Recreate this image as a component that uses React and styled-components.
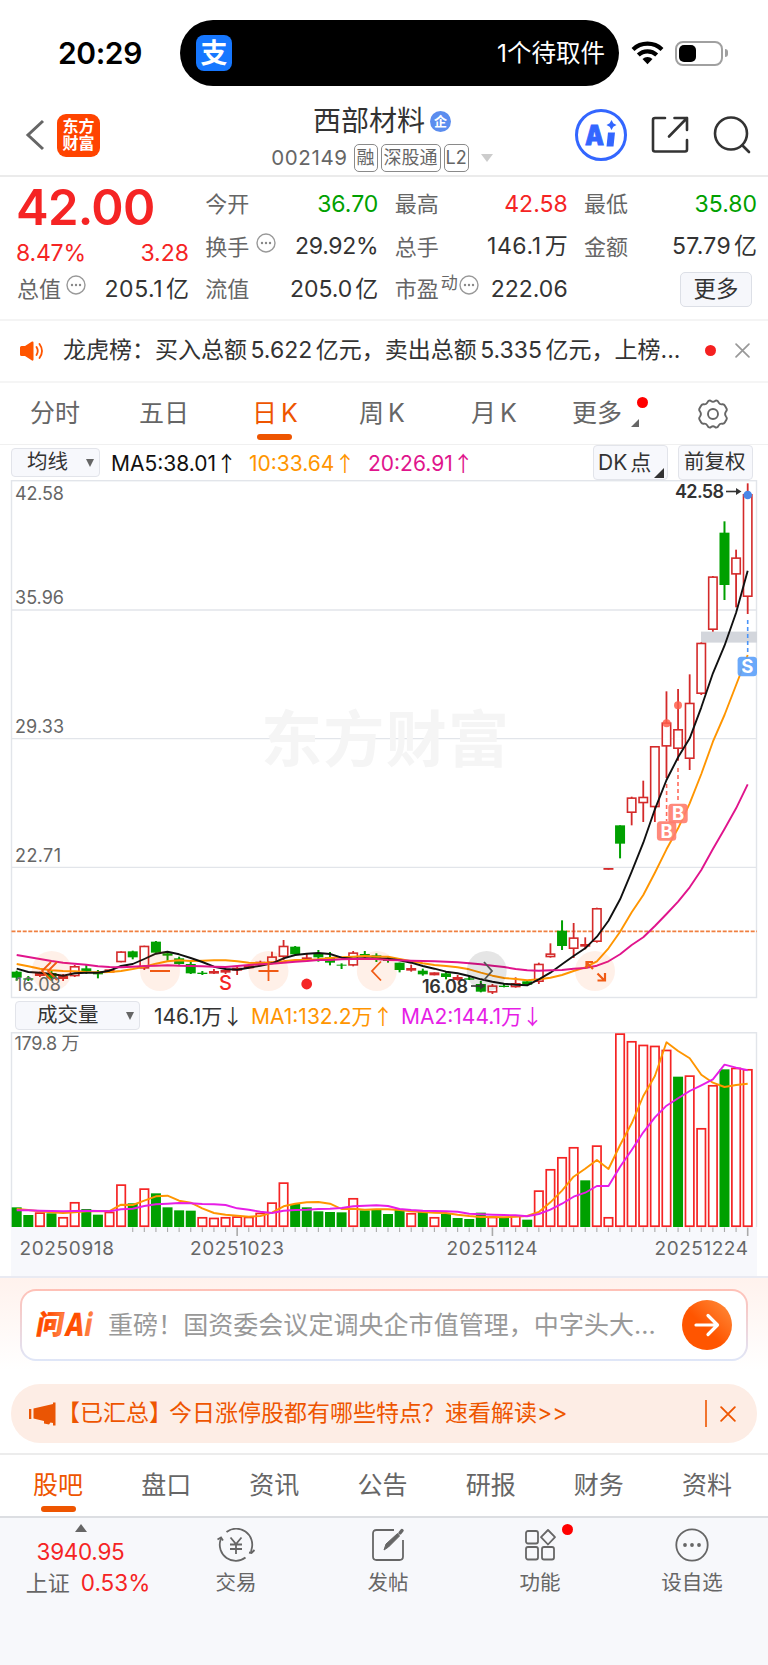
import React from 'react';
import styled, { createGlobalStyle } from 'styled-components';

const Global = createGlobalStyle`
  * { box-sizing: border-box; }
  html, body { margin: 0; padding: 0; background: #fff; }
  body {
    width: 768px;
    font-family: Inter, "Noto Sans CJK SC", sans-serif;
    color: #333;
    line-height: 1;
    white-space: nowrap;
  }
  svg { display: block; flex: none; }
`;

const RED = '#f52424';
const GREEN = '#00a000';
const ORANGE = '#ee5500';
const GRAY = '#666';
const AMBER = '#ff9500';
const PINK = '#e0148c';
const VIOLET = '#e61ee6';

const Page = styled.main`
  width: 768px;
  height: 1665px;
  display: flex;
  flex-direction: column;
  overflow: hidden;
  background: #fff;
`;

const T = styled.span`
  font-size: ${(p) => p.$size || 23}px;
  color: ${(p) => p.$color || 'inherit'};
  font-weight: ${(p) => p.$weight || 400};
  letter-spacing: ${(p) => p.$track || 0}px;
`;
const Unit = styled.span`
  margin-left: 3px;
  letter-spacing: 0;
`;
const Figure = styled.span`
  margin: 0 3.5px;
`;
const Arrow = styled.span`
  font-family: "Noto Sans CJK SC", sans-serif;
`;

/* ---------- status bar ---------- */
const StatusBar = styled.header`
  height: 106px;
  padding: 20px 39px 20px 58px;
  display: flex;
  align-items: center;
`;
const Clock = styled(T)`
  width: 122px;
`;
const Island = styled.div`
  flex: none;
  width: 439px;
  height: 66px;
  border-radius: 33px;
  background: #000;
  color: #fff;
  padding: 0 14px 0 16px;
  display: flex;
  align-items: center;
  justify-content: space-between;
  margin-right: 12px;
`;
const PayIcon = styled.div`
  width: 36px;
  height: 36px;
  border-radius: 8px;
  background: #1677ff;
  font-size: 27px;
  font-weight: 700;
  display: grid;
  place-items: center;
`;
const Battery = styled.div`
  width: 48px;
  height: 25px;
  border: 2px solid #a0a0a0;
  border-radius: 8px;
  padding: 2px;
  margin-left: 11px;
`;
const Charge = styled.div`
  width: 17px;
  height: 17px;
  border-radius: 5px;
  background: #000;
`;
const BatteryTip = styled.div`
  width: 3px;
  height: 8px;
  border-radius: 0 4px 4px 0;
  background: #a0a0a0;
  margin-left: 2px;
`;

/* ---------- title bar ---------- */
const TitleBar = styled.div`
  height: 71px;
  border-bottom: 2px solid #ebebeb;
  padding: 0 17px 0 25px;
  display: flex;
`;
const TitleSide = styled.div`
  width: ${(p) => (p.$w ? `${p.$w}px` : 'auto')};
  display: flex;
  align-items: center;
  height: 58px;
  gap: ${(p) => p.$gap}px;
`;
const AppLogo = styled.div`
  width: 43px;
  height: 43px;
  border-radius: 9px;
  background: #ff4400;
  color: #fff;
  font-size: 16px;
  line-height: 17.5px;
  font-weight: 700;
  display: grid;
  place-content: center;
  text-align: center;
`;
const TitleMid = styled.div`
  display: flex;
  flex-direction: column;
  align-items: center;
  width: 260px;
  margin-right: auto;
`;
const Name = styled.div`
  display: flex;
  align-items: center;
  gap: 5px;
  height: 30px;
  margin-left: 20px;
`;
const Badge = styled.span`
  width: 21px;
  height: 21px;
  border-radius: 50%;
  background: #5b8def;
  color: #fff;
  font-size: 13px;
  font-weight: 700;
  display: grid;
  place-items: center;
`;
const Meta = styled.div`
  display: flex;
  align-items: center;
  gap: 3px;
  margin-top: 8px;
  margin-left: 20px;
`;
const Code = styled(T)`
  margin-right: 3px;
`;
const Tag = styled.span`
  height: 28px;
  border: 1.5px solid #8a8a8a;
  border-radius: 5px;
  padding: 0 ${(p) => (p.$tight ? 1 : 2)}px;
  font-size: 18px;
  color: ${GRAY};
  display: grid;
  place-items: center;
`;
const MetaCaret = styled.i`
  border: 6.5px solid transparent;
  border-top: 8px solid #ccc;
  border-bottom: 0;
  margin-left: 9px;
`;
const AiRing = styled.div`
  width: 52px;
  height: 52px;
  border: 3px solid #3366ff;
  border-radius: 50%;
  display: grid;
  place-items: center;
`;

/* ---------- quote ---------- */
const Quote = styled.section`
  height: 144px;
  border-bottom: 2px solid #f4f4f4;
  padding: 6px 11px 0 17px;
  display: flex;
  justify-content: space-between;
`;
const QuoteCol = styled.div`
  width: ${(p) => p.$w || 173}px;
  display: flex;
  flex-direction: column;
`;
const Cell = styled.div`
  height: ${(p) => p.$h || 42.5}px;
  display: flex;
  align-items: center;
  justify-content: space-between;
  padding-top: ${(p) => p.$top || 0}px;
  margin-left: ${(p) => p.$ml || 0}px;
`;
const Label = styled.div`
  display: flex;
  align-items: center;
  font-size: 22px;
  color: ${GRAY};
`;
const Sup = styled.span`
  font-size: 17px;
  margin: -12px 0 0 2px;
`;
const InfoWrap = styled.span`
  margin: -8px 0 0 ${(p) => p.$ml}px;
`;
const MoreButton = styled.button`
  width: 72px;
  height: 35px;
  margin: 0 5px 0 auto;
  padding: 0;
  border: 1.5px solid #dcdfe6;
  border-radius: 5px;
  background: #f6f7fb;
  color: #333;
  font: 22.5px Inter, "Noto Sans CJK SC", sans-serif;
  line-height: 1;
`;

/* ---------- news ---------- */
const News = styled.section`
  height: 62px;
  border-bottom: 2px solid #f5f5f5;
  padding: 0 18px 1px 20px;
  display: flex;
  align-items: center;
`;
const NewsText = styled(T)`
  width: 642px;
  margin-left: 19px;
`;
const Dot = styled.i`
  width: ${(p) => p.$d}px;
  height: ${(p) => p.$d}px;
  border-radius: 50%;
  background: ${(p) => p.$c || '#f52020'};
`;

/* ---------- period tabs ---------- */
const Periods = styled.nav`
  height: 62px;
  border-bottom: 1px solid #f0f0f0;
  padding-left: 30px;
  display: grid;
  grid-template-columns: 109px 113px 107px 112px 101px 126px 30px;
  justify-items: start;
`;
const Tab = styled.div`
  position: relative;
  height: ${(p) => p.$h || 61}px;
  display: flex;
  align-items: center;
  font-size: 25px;
  word-spacing: -3px;
  color: ${(p) => (p.$on ? ORANGE : GRAY)};
  &::after {
    content: '';
    display: ${(p) => (p.$on ? 'block' : 'none')};
    position: absolute;
    left: calc(50% - 17.5px);
    bottom: ${(p) => p.$bar || 4}px;
    width: 35px;
    height: 6px;
    border-radius: 3px;
    background: ${ORANGE};
  }
`;
const TabDot = styled(Dot)`
  position: absolute;
  right: -26px;
  top: 14px;
`;
const Corner = styled.i`
  position: absolute;
  right: ${(p) => p.$r}px;
  bottom: ${(p) => p.$b}px;
  border-left: ${(p) => p.$s}px solid transparent;
  border-bottom: ${(p) => p.$s}px solid ${(p) => p.$c};
`;

/* ---------- chart ---------- */
const Toolbar = styled.div`
  height: ${(p) => p.$h}px;
  padding: 0 15px 0 ${(p) => p.$pl}px;
  display: flex;
  align-items: center;
`;
const Chip = styled.div`
  position: relative;
  width: ${(p) => p.$w}px;
  height: ${(p) => p.$h}px;
  border: 1.5px solid #e2e4ea;
  border-radius: 4px;
  background: #f7f8fc;
  font-size: ${(p) => p.$size || 20.5}px;
  word-spacing: -3px;
  display: flex;
  align-items: center;
  padding: 0 5px 0 ${(p) => p.$pl}px;
  margin-left: ${(p) => p.$ml || 0}px;
  justify-content: space-between;
`;
const Caret = styled.i`
  border: 4.5px solid transparent;
  border-top: 8px solid #666;
  border-bottom: 0;
`;
const Indicator = styled(T)`
  margin-left: ${(p) => p.$ml}px;
  width: ${(p) => p.$w}px;
`;
const Spacer = styled.div`
  flex: 1;
`;

/* ---------- ask AI ---------- */
const AskArea = styled.section`
  height: 108px;
  border-top: 2px solid #e9eaf2;
  padding: 11px 20px 0;
  background: linear-gradient(#fff2ed, #fff 92px);
`;
const AskBox = styled.div`
  height: 72px;
  border: 2px solid transparent;
  border-radius: 16px;
  background: linear-gradient(#fff, #fff) padding-box,
    linear-gradient(#ffc0b6, #dfe6f8) border-box;
  padding: 0 14px;
  display: flex;
  align-items: center;
`;
const AskText = styled(T)`
  margin-left: 9px;
  width: 574px;
`;
const Go = styled.div`
  width: 50px;
  height: 50px;
  border-radius: 50%;
  background: linear-gradient(45deg, #ff5500 45%, #ff9040);
  display: grid;
  place-items: center;
`;
const Promo = styled.section`
  height: 59px;
  margin: 0 11px;
  border-radius: 29px;
  background: #fdede5;
  color: ${ORANGE};
  padding: 0 21px 0 18px;
  display: flex;
  align-items: center;
`;
const PromoText = styled(T)`
  width: 652px;
`;
const PromoLead = styled.span`
  margin-right: -3px;
`;
const Rule = styled.i`
  width: 2px;
  height: 27px;
  background: ${ORANGE};
  opacity: 0.8;
  margin-right: 13px;
`;

/* ---------- bottom ---------- */
const Sections = styled.nav`
  height: 65px;
  margin-top: 10px;
  border-top: 2px solid #ececec;
  border-bottom: 2px solid #dcdee2;
  padding: 0 36px 0 33px;
  display: flex;
  justify-content: space-between;
`;
const BottomBar = styled.footer`
  flex: 1;
  background: #f7f8fb;
  display: flex;
  padding-top: 6px;
`;
const IndexBox = styled.div`
  width: 160px;
  padding-left: 1px;
  display: flex;
  flex-direction: column;
  align-items: center;
`;
const IndexValue = styled(T)`
  margin-top: 9px;
`;
const IndexLine = styled.div`
  display: flex;
  gap: 11px;
  margin: 8px 0 0 15px;
`;
const Up = styled.i`
  border: 6px solid transparent;
  border-bottom: 8px solid #666;
  border-top: 0;
`;
const Action = styled.div`
  position: relative;
  width: 152px;
  padding-top: 3.5px;
  display: flex;
  flex-direction: column;
  align-items: center;
  gap: 11.5px;
  font-size: 20.5px;
  color: ${GRAY};
`;
const ActionDot = styled(Dot)`
  position: absolute;
  left: 98px;
  top: 0;
`;

/* ---------- chart data ---------- */
const STEP = 11.603;
const cx = (i) => 16.7 + i * STEP;
const scale = (base, list) => list.map((v) => base + v / 3);

// [up?, body top, body bottom, high, low]
const rows = (base, list) => list.map(([k, ...v]) => [k, ...scale(base, v)]);
const candles = [
  ...rows(900, [
    [0, 215, 233, 212, 242], [0, 235, 239, 228, 243], [1, 219, 228, 215, 231], [0, 219, 235, 212, 242],
    [1, 228, 237, 222, 243], [1, 198, 229, 195, 231], [0, 205, 214, 192, 222], [0, 217, 223, 210, 235],
    [1, 208, 218, 208, 218], [1, 154, 187, 154, 187], [0, 154, 172, 152, 178], [1, 137, 206, 137, 210],
    [0, 125, 158, 123, 158], [0, 160, 167, 156, 182], [0, 175, 192, 170, 194], [0, 192, 220, 182, 222],
    [0, 218, 222, 213, 225], [1, 213, 221, 207, 222], [1, 210, 218, 205, 222], [1, 203, 212, 198, 225],
    [1, 196, 205, 194, 206], [1, 185, 193, 182, 194], [1, 169, 190, 155, 192], [1, 137, 171, 120, 180],
    [0, 140, 163, 138, 163], [1, 172, 181, 160, 182], [0, 160, 172, 150, 185], [0, 172, 188, 156, 196],
    [0, 194, 197, 190, 207], [1, 157, 197, 153, 199], [0, 162, 167, 153, 178], [0, 166, 173, 160, 186],
  ]),
  ...rows(880, [
    [0, 236, 243, 232, 248], [0, 248, 270, 248, 277], [1, 264, 272, 254, 275], [0, 272, 283, 266, 287],
    [1, 277, 286, 277, 286], [0, 280, 291, 276, 298], [1, 291, 300, 285, 302], [0, 295, 299, 288, 300],
    [0, 312, 335, 303, 337], [1, 316, 338, 312, 342], [0, 317, 321, 310, 322], [1, 309, 322, 292, 323],
    [0, 304, 314, 302, 314], [1, 251, 306, 248, 312], [1, 220, 232, 190, 233], [0, 152, 198, 121, 210],
    [1, 172, 207, 129, 234], [1, 192, 200, 172, 208], [1, 84, 186, 83, 188],
  ]),
  ...rows(470, [
    [1, 1194, 1199, 1194, 1199], [0, 1066, 1121, 1066, 1165], [1, 982, 1029, 980, 1066], [1, 980, 1000, 932, 1056],
    [1, 828, 1012, 828, 1056], [1, 757, 830, 664, 924], [1, 777, 837, 657, 872], [1, 698, 867, 613, 900],
    [1, 518, 672, 517, 675], [1, 319, 480, 318, 485], [0, 188, 345, 154, 390], [1, 262, 314, 239, 412],
    [1, 72, 381, 40, 432],
  ]),
];
const ma5 = [
  ...scale(900, [206, 216, 218, 222, 227, 220, 218, 218, 212, 198, 192, 177, 161, 155, 163, 174, 186, 200, 207, 209, 203, 197, 190, 175, 165, 161, 159, 162, 173, 176, 175, 176]),
  ...scale(880, [236, 241, 248, 258, 266, 275, 280, 288, 298, 305, 311, 314, 316, 298, 278, 253, 228, 205, 170, 122]),
  ...scale(470, [1288, 1205, 1118, 1018, 930, 862, 805, 712, 610, 527, 428, 302]),
];
const ma10 = [
  ...scale(900, [192, 199, 206, 211, 213, 214, 216, 217, 216, 213, 207, 200, 191, 184, 181, 183, 182, 181, 181, 184, 188, 190, 187, 184, 180, 180, 178, 174, 172, 170, 168, 170]),
  ...scale(880, [230, 237, 244, 250, 255, 258, 262, 268, 278, 287, 294, 297, 301, 298, 293, 285, 273, 262, 244, 205, 155, 97]),
  ...scale(470, [1275, 1208, 1138, 1075, 1000, 912, 815, 735, 645, 555]),
];
const ma20 = [
  ...scale(900, [165, 171, 177, 183, 188, 191, 194, 199, 201, 202, 200, 198, 197, 196, 197, 198, 199, 200, 201, 198, 195, 193, 191, 188, 185, 183, 180, 180, 178, 177, 176, 177]),
  ...scale(880, [240, 241, 242, 243, 244, 245, 247, 250, 253, 257, 261, 267, 271, 272, 271, 270, 266, 264, 257, 244, 223, 195, 172, 138, 102]),
  ...scale(470, [1295, 1252, 1200, 1137, 1077, 1015, 943]),
];
const volumes = scale(1030, [
  532, 555, 547, 550, 561, 516, 537, 554, 545, 463, 520, 475, 490, 532, 541, 542, 561, 563, 561, 559, 560, 548, 517, 457, 522, 532, 544, 546, 547, 504, 541, 538,
  552, 540, 549, 546, 561, 552, 564, 567, 548, 560, 564, 556, 569, 481, 417, 381, 351, 451, 346, 561, 10, 33, 44, 47, 59, 140, 136, 294, 165, 118, 113, 117,
]);
const volumeDown = new Set([0, 1, 3, 6, 7, 10, 12, 13, 14, 15, 24, 25, 26, 27, 28, 30, 31, 32, 33, 35, 37, 38, 39, 40, 42, 44, 49, 57, 61]);
const vma1 = scale(1030, [
  537, 540, 544, 547, 549, 547, 544, 544, 543, 524, 525, 512, 499, 497, 512, 518, 535, 549, 554, 557, 560, 558, 548, 529, 521, 517, 516, 521, 537, 536, 539, 538,
  538, 540, 544, 546, 548, 549, 554, 558, 561, 561, 562, 560, 558, 546, 517, 482, 440, 416, 390, 417, 345, 280, 198, 138, 37, 63, 85, 134, 158, 171, 165, 161,
]);
const vma2 = scale(1030, [
  541, 541, 542, 543, 544, 543, 542, 543, 544, 538, 536, 528, 523, 521, 519, 520, 522, 523, 525, 535, 539, 545, 549, 542, 540, 539, 537, 536, 534, 529, 527, 526,
  528, 537, 540, 542, 543, 544, 545, 551, 553, 554, 555, 556, 559, 552, 539, 521, 500, 488, 468, 468, 410, 360, 307, 262, 227, 205, 183, 166, 148, 104, 113, 121,
]);
const points = (ys) => ys.map((y, i) => `${cx(i).toFixed(1)},${y.toFixed(1)}`).join(' ');

const Line = ({ ys, color }) => (
  <polyline points={points(ys)} fill="none" stroke={color} strokeWidth="1.9" strokeLinejoin="round" />
);

function Candle({ i, d: [up, top, bot, hi, lo] }) {
  const x = cx(i);
  if (!up)
    return (
      <g fill={GREEN}>
        <rect x={x - 1} y={hi} width="2" height={lo - hi} />
        <rect x={x - 5} y={top} width="10" height={bot - top} />
      </g>
    );
  return (
    <g>
      <rect x={x - 0.9} y={hi} width="1.8" height={lo - hi} fill="#d42a2a" />
      <rect x={x - 4.2} y={top + 0.8} width="8.4" height={Math.max(0.2, bot - top - 1.6)} fill="#fff" stroke="#d42a2a" strokeWidth="1.6" />
    </g>
  );
}

const Flag = ({ x, y, c, t }) => (
  <g>
    <rect x={x - 9.7} y={y - 9.8} width="19.4" height="19.6" rx="3.5" fill={c} />
    <text x={x} y={y + 6.5} fontSize="18.5" fontWeight="700" fill="#fff" textAnchor="middle">{t}</text>
  </g>
);

function PriceChart() {
  return (
    <svg width="768" height="519" viewBox="0 480 768 519">
      <g fill="none" stroke="#e2e5ea" strokeWidth="1.4">
        <rect x="11.5" y="480.7" width="745" height="516.8" />
        <path d="M11.5 610H756.5M11.5 738.6H756.5M11.5 867.4H756.5" />
      </g>
      <text x="261" y="762" fontSize="61" fontWeight="700" fill="#f5f5f5" textLength="248">东方财富</text>
      <rect x="701" y="631.6" width="56" height="11" fill="#d3d6dc" />
      <path d="M11.5 931.3H757" stroke="#f08040" strokeWidth="1.7" strokeDasharray="4 1.6" />
      {candles.map((d, i) => <Candle key={i} i={i} d={d} />)}
      <g fill="#ff5f4c" opacity="0.85">
        <circle cx="666.6" cy="723.3" r="4" />
        <circle cx="678" cy="705.3" r="4" />
      </g>
      <circle cx="747.7" cy="495" r="4.3" fill="#4a86e8" />
      <g strokeWidth="1.6" strokeDasharray="4 3">
        <path d="M666.6 784V821M678 768V803" stroke="#ff6a5a" />
        <path d="M747.7 620V655" stroke="#4a94f8" />
      </g>
      <Line ys={ma10} color={AMBER} />
      <Flag x={666.6} y={831} c="#ff7d6ee8" t="B" />
      <Flag x={678} y={813.5} c="#ff7d6ee8" t="B" />
      <Flag x={747.3} y={666.5} c="#5ca0fae8" t="S" />
      <Line ys={ma5} color="#111" />
      <Line ys={ma20} color={PINK} />
      <g fill="#ff5500" fillOpacity="0.09">
        <circle cx="51.7" cy="971" r="20" />
        <circle cx="160" cy="971" r="20" />
        <circle cx="268.5" cy="971" r="20" />
        <circle cx="376.8" cy="971" r="20" />
        <circle cx="595" cy="971" r="20" />
        <circle cx="486.7" cy="971" r="20" fill="#000" fillOpacity="0.1" />
      </g>
      <g fill="none" stroke="#f05a14" strokeWidth="1.8">
        <path d="M51 962L42 971L51 980M57 962L48 971L57 980" />
        <path d="M150 971H170M258.5 971H278.5M268.5 961V981" />
        <path d="M381 961.5L372 971L381 980.5" />
        <path d="M593 969L587 963M586.500 968.500V962H593M597.500 973.500L604.500 980.500M605 973V980.500H597.500" strokeWidth="2.2" />
        <path d="M484 962L492 971L484 980" stroke="#555" />
      </g>
      <g fill="#666" fontSize="18">
        <text x="15" y="500" textLength="49">42.58</text>
        <text x="15" y="604" textLength="49">35.96</text>
        <text x="15" y="733" textLength="49">29.33</text>
        <text x="15" y="862" textLength="46">22.71</text>
        <text x="15" y="991" textLength="46">16.08</text>
      </g>
      <g fill="#333" fontSize="18" fontWeight="600">
        <text x="675" y="497.500" textLength="49">42.58</text>
        <text x="422" y="993" textLength="46">16.08</text>
      </g>
      <g stroke="#333" strokeWidth="1.6" fill="#333">
        <path d="M726 491.500H738" />
        <path d="M736 488L741.500 491.500L736 495Z" stroke="none" />
        <path d="M471 986H482" />
        <path d="M480 982.500L485.500 986L480 989.500Z" stroke="none" />
      </g>
      <text x="225.500" y="989.5" fontSize="20" fontWeight="500" fill={RED} textAnchor="middle">S</text>
      <circle cx="306.7" cy="984" r="5.4" fill={RED} />
    </svg>
  );
}

function VolumeChart() {
  return (
    <svg width="768" height="244" viewBox="0 1032 768 244">
      <rect x="11" y="1227" width="746" height="49" fill="#f7f8fc" />
      <path d="M11.5 1227V1032.700H756.5V1227" fill="none" stroke="#e2e5ea" strokeWidth="1.4" />
      {volumes.map((y, i) =>
        volumeDown.has(i) ? (
          <rect key={i} x={cx(i) - 5} y={y} width="10" height={1227 - y} fill={GREEN} />
        ) : (
          <rect key={i} x={cx(i) - 4.2} y={y + 0.8} width="8.4" height={1225.4 - y} fill="#fff" stroke={RED} strokeWidth="1.7" />
        )
      )}
      <Line ys={vma1} color={AMBER} />
      <Line ys={vma2} color={VIOLET} />
      <g stroke="#aaa">
        {volumes.map((_, i) => {
          if (i < 10) return null;
          const major = i === 19 || i === 41 || i === 63;
          return <path key={i} d={`M${cx(i)} 1227.500V${major ? 1236 : 1232}`} strokeWidth={major ? 1.6 : 1.1} />;
        })}
      </g>
      <g fill="#666" fontSize="19">
        <text x="14.500" y="1050" fontSize="18" textLength="65">179.8 万</text>
        <text x="19.500" y="1255" textLength="94.500">20250918</text>
        <text x="190" y="1255" textLength="94">20251023</text>
        <text x="446.500" y="1255" textLength="91">20251124</text>
        <text x="654.500" y="1255" textLength="93.500">20251224</text>
      </g>
    </svg>
  );
}

/* ---------- icons ---------- */
const Info = ({ ml = 5 }) => (
  <InfoWrap $ml={ml}>
    <svg width="20" height="20" viewBox="0 0 20 20">
      <circle cx="10" cy="10" r="9" fill="none" stroke="#999" strokeWidth="1.4" />
      <g fill="#888"><circle cx="6" cy="10" r="1.2" /><circle cx="10" cy="10" r="1.2" /><circle cx="14" cy="10" r="1.2" /></g>
    </svg>
  </InfoWrap>
);
const Cross = ({ s, c, w }) => (
  <svg width={s} height={s} viewBox="0 0 14 14">
    <path d="M1 1L13 13M13 1L1 13" stroke={c} strokeWidth={w} strokeLinecap="round" />
  </svg>
);
const Wifi = () => (
  <svg width="33" height="24" viewBox="0 0 33 24">
    <g fill="none" stroke="#000" strokeWidth="4.2">
      <path d="M2 8.500A21 21 0 0 1 31 8.500" />
      <path d="M7.300 14A13.300 13.300 0 0 1 25.700 14" />
    </g>
    <path d="M11.500 18A7.300 7.300 0 0 1 21.500 18L16.500 23.300Z" />
  </svg>
);
const AiMark = () => (
  <svg width="34" height="32" viewBox="0 0 34 32" fill="#3366ff">
    <text x="1" y="26" fontSize="27" fontWeight="900" stroke="#3366ff" strokeWidth="0.8" textLength="19" lengthAdjust="spacingAndGlyphs">A</text>
    <path d="M24 13.500H31L29.500 27.500H22.500Z" />
    <path d="M27.500 1L29.300 4.200L32.500 6L29.300 7.800L27.500 11L25.700 7.800L22.500 6L25.700 4.200Z" />
  </svg>
);

const Trade = () => (
  <svg width="40" height="34" viewBox="0 0 40 34" fill="none" stroke="#666" strokeWidth="1.8">
    <path d="M10.500 4A16 16 0 0 1 35.500 21.500L35 24M29.500 29.500A16 16 0 0 1 4.500 12L5 10" />
    <path d="M1.500 11.500L5 9.500L7 12.500M33 24.500L35.500 25L38.500 22" />
    <path d="M14.500 9.500L20 16L25.500 9.500M14 16.500H26M14 21H26M20 16V26" />
  </svg>
);
const Post = () => (
  <svg width="34" height="34" viewBox="0 0 34 34" fill="none" stroke="#666" strokeWidth="1.8">
    <path d="M23 2H5.500Q2 2 2 5.500V28.500Q2 32 5.500 32H28.500Q32 32 32 28.500V12" />
    <path d="M13 22L15 16L26.500 5.500L28.500 8L17.500 19Z" fill="#666" strokeWidth="1" />
    <path d="M29 5L31 2.500" strokeWidth="3.500" strokeLinecap="round" />
  </svg>
);
const Apps = () => (
  <svg width="34" height="34" viewBox="0 0 34 34" fill="none" stroke="#666" strokeWidth="1.8" strokeLinejoin="round">
    <rect x="3" y="3" width="12" height="12.500" rx="2" />
    <rect x="3" y="19" width="12" height="12.500" rx="2" />
    <rect x="19" y="19" width="12" height="12.500" rx="2" />
    <path d="M25 2L32 9.200L25 16.500L18 9.200Z" />
  </svg>
);
const More = () => (
  <svg width="34" height="34" viewBox="0 0 34 34">
    <circle cx="17" cy="17" r="15.700" fill="none" stroke="#666" strokeWidth="1.8" />
    <g fill="#666"><circle cx="10" cy="17" r="1.900" /><circle cx="17" cy="17" r="1.900" /><circle cx="24" cy="17" r="1.900" /></g>
  </svg>
);

export default function App() {
  return (
    <Page>
      <Global />
      <StatusBar>
        <Clock $size={30} $weight={600} $color="#000" $track={-0.4}>20:29</Clock>
        <Island>
          <PayIcon>支</PayIcon>
          <T $size={24.5}>1个待取件</T>
        </Island>
        <Wifi />
        <Battery><Charge /></Battery>
        <BatteryTip />
      </StatusBar>

      <TitleBar>
        <TitleSide $gap={12} $w={217}>
          <svg width="20" height="32" viewBox="0 0 20 32"><path d="M18 2L3 16L18 30" fill="none" stroke="#666" strokeWidth="3" /></svg>
          <AppLogo>东方<br />财富</AppLogo>
        </TitleSide>
        <TitleMid>
          <Name><T $size={28}>西部材料</T><Badge>企</Badge></Name>
          <Meta>
            <Code $size={20.5} $color={GRAY} $track={0.6}>002149</Code>
            <Tag>融</Tag><Tag>深股通</Tag><Tag $tight>L2</Tag>
            <MetaCaret />
          </Meta>
        </TitleMid>
        <TitleSide $gap={24}>
          <AiRing><AiMark /></AiRing>
          <svg width="38" height="38" viewBox="0 0 38 38" fill="none" stroke="#333" strokeWidth="2.600" strokeLinejoin="round" strokeLinecap="round">
            <path d="M14 2H4Q2 2 2 4V33.500Q2 35.500 4 35.500H34Q36 35.500 36 33.500V24" />
            <path d="M23.500 2H36V14M36 2L18 20.500" />
          </svg>
          <svg width="38" height="38" viewBox="0 0 38 38" fill="none" stroke="#333" strokeWidth="2.600" strokeLinecap="round">
            <circle cx="18" cy="17.500" r="16" /><path d="M29.500 29.500L36 36" />
          </svg>
        </TitleSide>
      </TitleBar>

      <Quote>
        <QuoteCol $w={172}>
          <Cell $h={48} $ml={-1}><T $size={49} $weight={600} $color={RED} $track={-0.7}>42.00</T></Cell>
          <Cell $h={37} $top={8} $ml={-1}><T $color={RED} $track={-0.2}>8.47%</T><T $color={RED}>3.28</T></Cell>
          <Cell><Label>总值<Info /></Label><T $track={0.5}>205.1<Unit>亿</Unit></T></Cell>
        </QuoteCol>
        <QuoteCol>
          <Cell><Label>今开</Label><T $color={GREEN}>36.70</T></Cell>
          <Cell><Label>换手<Info ml={7} /></Label><T $track={-0.3}>29.92%</T></Cell>
          <Cell><Label>流值</Label><T>205.0<Unit>亿</Unit></T></Cell>
        </QuoteCol>
        <QuoteCol>
          <Cell><Label>最高</Label><T $color={RED}>42.58</T></Cell>
          <Cell><Label>总手</Label><T $track={0.6}>146.1<Unit>万</Unit></T></Cell>
          <Cell><Label>市盈<Sup>动</Sup><Info ml={1} /></Label><T>222.06</T></Cell>
        </QuoteCol>
        <QuoteCol>
          <Cell><Label>最低</Label><T $color={GREEN}>35.80</T></Cell>
          <Cell><Label>金额</Label><T $track={0.3}>57.79<Unit>亿</Unit></T></Cell>
          <Cell><MoreButton>更多</MoreButton></Cell>
        </QuoteCol>
      </Quote>

      <News>
        <svg width="24" height="20" viewBox="0 0 24 20">
          <path d="M0 6.500Q0 5 1.500 5H5L12 0.500Q13.500 0 13.500 1.500V18.500Q13.500 20 12 19.500L5 15H1.500Q0 15 0 13.500Z" fill="#ff5500" />
          <path d="M16.500 6Q19 10 16.500 14M19.500 3Q24.500 10 19.500 17" fill="none" stroke="#ff5500" strokeWidth="1.800" strokeLinecap="round" />
        </svg>
        <NewsText>龙虎榜：买入总额<Figure>5.622</Figure>亿元，卖出总额<Figure>5.335</Figure>亿元，上榜...</NewsText>
        <Dot $d={11} />
        <Spacer />
        <Cross s={15} c="#999" w={1.6} />
      </News>

      <Periods>
        <Tab>分时</Tab>
        <Tab>五日</Tab>
        <Tab $on>日 K</Tab>
        <Tab>周 K</Tab>
        <Tab>月 K</Tab>
        <Tab>更多<TabDot $d={11} $c="#ff0000" /><Corner $r={-17} $b={17} $s={8} $c="#666" /></Tab>
        <Tab>
          <svg width="30" height="30" viewBox="0 0 30 30" fill="none" stroke="#666" strokeWidth="1.900" strokeLinejoin="round">
            <path d="M10.500 1.800Q12 1 13 2Q15 3.600 17 2Q18 1 19.500 1.800L21 4Q22 5.600 24 5.300Q26 5 26.800 6.500L28.500 9.500Q29.300 11 28 12.500Q26.200 15 28 17.500Q29.300 19 28.500 20.500L26.800 23.500Q26 25 24 24.700Q22 24.400 21 26L19.500 28.200Q18 29 17 28Q15 26.400 13 28Q12 29 10.500 28.200L9 26Q8 24.400 6 24.700Q4 25 3.200 23.500L1.500 20.500Q0.700 19 2 17.500Q3.800 15 2 12.500Q0.700 11 1.500 9.500L3.200 6.500Q4 5 6 5.300Q8 5.600 9 4Z" />
            <circle cx="15" cy="15" r="5" />
          </svg>
        </Tab>
      </Periods>

      <Toolbar $h={35} $pl={11}>
        <Chip $w={89} $h={29} $pl={15}>均线<Caret /></Chip>
        <Indicator $size={21} $color="#111" $ml={11} $w={138}>MA5:38.01<Arrow>↑</Arrow></Indicator>
        <Indicator $size={21} $color={AMBER} $ml={0} $w={119}>10:33.64<Arrow>↑</Arrow></Indicator>
        <Indicator $size={21} $color={PINK} $ml={0} $w={110}>20:26.91<Arrow>↑</Arrow></Indicator>
        <Spacer />
        <Chip $w={75} $h={35} $pl={4} $size={21}>DK 点<Corner $r={3} $b={1} $s={10} $c="#333" /></Chip>
        <Chip $w={75} $h={35} $pl={5} $ml={10}>前复权</Chip>
      </Toolbar>
      <PriceChart />
      <Toolbar $h={33} $pl={15}>
        <Chip $w={125} $h={29} $pl={21}>成交量<Caret /></Chip>
        <Indicator $size={21} $ml={14} $w={97}>146.1万<Arrow>↓</Arrow></Indicator>
        <Indicator $size={21} $color={AMBER} $ml={0} $w={150}>MA1:132.2万<Arrow>↑</Arrow></Indicator>
        <Indicator $size={21} $color={VIOLET} $ml={0} $w={140}>MA2:144.1万<Arrow>↓</Arrow></Indicator>
      </Toolbar>
      <VolumeChart />

      <AskArea>
        <AskBox>
          <svg width="63" height="52" viewBox="0 0 63 52">
            <defs><linearGradient id="ask" x1="0" x2="1"><stop offset="0.4" stopColor="#ff4d00" /><stop offset="1" stopColor="#ff8a50" /></linearGradient></defs>
            <g transform="skewX(-10)" fill="url(#ask)" fontWeight="900">
              <text x="5.500" y="35.500" fontSize="27" stroke="#ff4d00" strokeWidth="0.500">问</text>
              <text x="34" y="37" fontSize="32" fontWeight="800" textLength="27" lengthAdjust="spacingAndGlyphs">Ai</text>
            </g>
          </svg>
          <AskText $size={25} $color="#999" $track={0.05}>重磅！国资委会议定调央企市值管理，中字头大...</AskText>
          <Go>
            <svg width="26" height="24" viewBox="0 0 26 24" fill="none" stroke="#fff" strokeWidth="3.200" strokeLinecap="round" strokeLinejoin="round"><path d="M2 12H23M14 2.500L23.500 12L14 21.500" /></svg>
          </Go>
        </AskBox>
      </AskArea>
      <Promo>
        <svg width="28" height="24" viewBox="0 0 28 24" fill="#ea5504">
          <rect x="0" y="7" width="2.300" height="10" />
          <path d="M4.500 6.500L24 2V0.500H26.500V23.500H24V21L21.500 20.500L20 22.500L15 21.500V19L4.500 16.500Z" />
        </svg>
        <PromoText><PromoLead>【已汇总】</PromoLead>今日涨停股都有哪些特点？速看解读&gt;&gt;</PromoText>
        <Rule />
        <Cross s={16} c={ORANGE} w={1.6} />
      </Promo>

      <Sections>
        {['股吧', '盘口', '资讯', '公告', '研报', '财务', '资料'].map((t, i) => (
          <Tab key={t} $on={i === 0} $bar={4}>{t}</Tab>
        ))}
      </Sections>
      <BottomBar>
        <IndexBox>
          <Up />
          <IndexValue $size={22.5} $color={RED} $track={-0.3}>3940.95</IndexValue>
          <IndexLine><T $size={22} $color={GRAY}>上证</T><T $size={22.5} $color={RED}>0.53%</T></IndexLine>
        </IndexBox>
        <Action><Trade />交易</Action>
        <Action><Post />发帖</Action>
        <Action><Apps />功能<ActionDot $d={11} $c="#ff0000" /></Action>
        <Action><More />设自选</Action>
      </BottomBar>
    </Page>
  );
}
